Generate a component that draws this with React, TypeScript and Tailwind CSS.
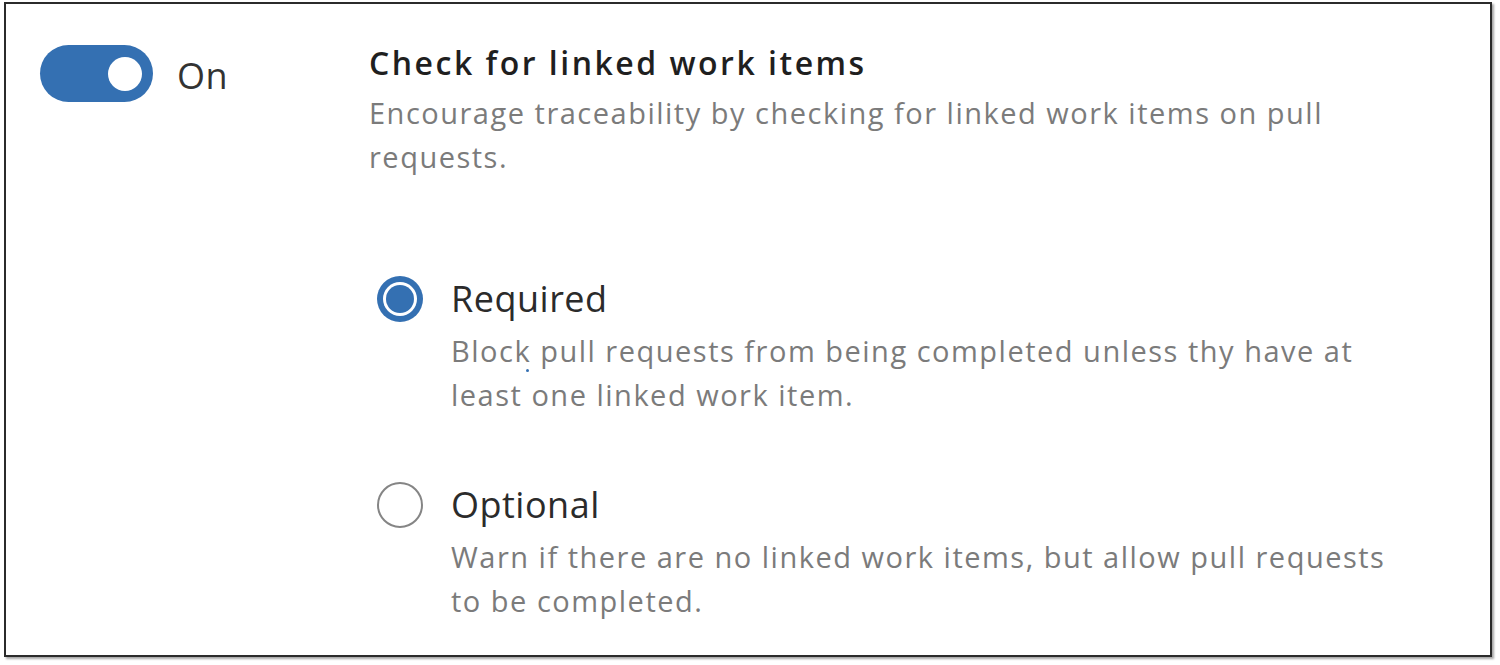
import React from 'react';

const font = "font-['Open_Sans','Noto_Sans',sans-serif]";

function Toggle() {
    return (
        <div className="flex h-[57px] w-[113px] items-center justify-end rounded-full bg-[#3470b2] pr-[11px]">
            <div className="h-[34px] w-[34px] rounded-full bg-white" />
        </div>
    );
}

function Radio({ checked }: { checked: boolean }) {
    if (checked) {
        return (
            <div className="h-[46px] w-[46px] rounded-full bg-[#3470b2] p-[6px]">
                <div className="h-full w-full rounded-full bg-white p-[3px]">
                    <div className="h-full w-full rounded-full bg-[#3470b2]" />
                </div>
            </div>
        );
    }
    return <div className="h-[46px] w-[46px] rounded-full border-2 border-[#858585] bg-white" />;
}

function Option({
    checked,
    label,
    lines,
    className,
    dot,
}: {
    checked: boolean;
    label: string;
    lines: string[];
    className?: string;
    dot?: boolean;
}) {
    return (
        <div className={`flex items-start ${className ?? ''}`}>
            <div className="flex h-[48px] w-[82px] items-center pl-[8px]">
                <Radio checked={checked} />
            </div>
            <div>
                <div className="text-[36px] leading-[48px] tracking-[0.5px] text-[#2b2b2b]">{label}</div>
                <div className="relative mt-[6px] text-[29px] leading-[44px] tracking-[1.5px] text-[#7b7b7b]">
                    {lines.map((l) => (
                        <div key={l} className="whitespace-nowrap">
                            {l}
                        </div>
                    ))}
                    {dot && <span className="absolute left-[75px] top-[40px] h-[3px] w-[3px] rounded-full bg-[#3470b2]" />}
                </div>
            </div>
        </div>
    );
}

export default function App() {
    return (
        <div className={`h-[665px] w-[1500px] bg-white pl-[4px] pt-[2px] ${font}`}>
            <div className="flex h-[655px] w-[1488px] items-start border-2 border-[#2b2b2b] bg-white shadow-[2px_2px_2px_rgba(0,0,0,0.35)]">
                <div className="flex w-[363px] items-start gap-[24px] pl-[34px] pt-[41px]">
                    <Toggle />
                    <span className="mt-[7px] text-[36px] leading-[48px] tracking-[0.5px] text-[#333333]">On</span>
                </div>
                <div className="pt-[39px]">
                    <h1 className="text-[32px] font-semibold leading-[40px] tracking-[2.5px] text-[#1f1f1f]">
                        Check for linked work items
                    </h1>
                    <div className="mt-[8px] text-[29px] leading-[44px] tracking-[1.5px] text-[#7b7b7b]">
                        <div className="whitespace-nowrap">
                            Encourage traceability by checking for linked work items on pull
                        </div>
                        <div>requests.</div>
                    </div>
                    <Option
                        className="mt-[96px]"
                        checked
                        label="Required"
                        dot
                        lines={['Block pull requests from being completed unless thy have at', 'least one linked work item.']}
                    />
                    <Option
                        className="mt-[64px]"
                        checked={false}
                        label="Optional"
                        lines={['Warn if there are no linked work items, but allow pull requests', 'to be completed.']}
                    />
                </div>
            </div>
        </div>
    );
}
